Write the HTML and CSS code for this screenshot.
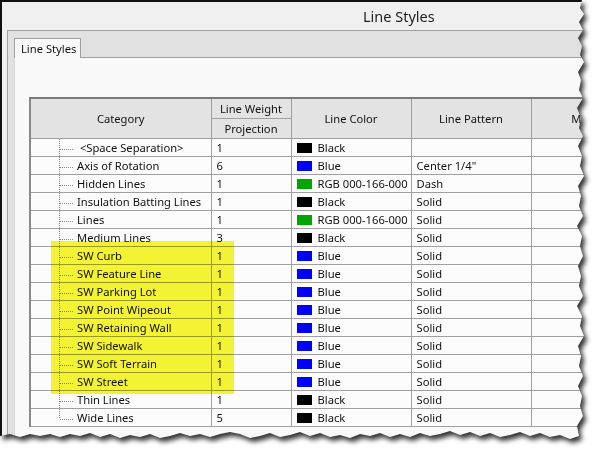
FILE: index.html
```html
<!DOCTYPE html>
<html lang="en">
<head>
  <meta charset="UTF-8">
  <title>Line Styles</title>
  <link rel="stylesheet" href="styles.css">
</head>
<body>
  <div class="sheet">
    <div class="paper">
      <div class="titlebar">Line Styles</div>

      <div class="frame">
        <div class="tabs">
          <div class="tab">Line Styles</div>
        </div>

        <div class="panel">
          <div class="grid-wrap">
            <table class="grid">
              <colgroup>
                <col class="c-cat">
                <col class="c-weight">
                <col class="c-color">
                <col class="c-pattern">
                <col class="c-material">
              </colgroup>
              <thead>
                <tr>
                  <th rowspan="2">Category</th>
                  <th class="half">Line Weight</th>
                  <th rowspan="2">Line Color</th>
                  <th rowspan="2">Line Pattern</th>
                  <th rowspan="2">Material</th>
                </tr>
                <tr>
                  <th class="half">Projection</th>
                </tr>
              </thead>
              <tbody>
                <tr>
                  <td class="cat"><span class="twig"></span> &lt;Space Separation&gt;</td>
                  <td>1</td>
                  <td><span class="swatch black"></span>Black</td>
                  <td></td>
                  <td></td>
                </tr>
                <tr>
                  <td class="cat"><span class="twig"></span>Axis of Rotation</td>
                  <td>6</td>
                  <td><span class="swatch blue"></span>Blue</td>
                  <td>Center 1/4"</td>
                  <td></td>
                </tr>
                <tr>
                  <td class="cat"><span class="twig"></span>Hidden Lines</td>
                  <td>1</td>
                  <td><span class="swatch green"></span>RGB 000-166-000</td>
                  <td>Dash</td>
                  <td></td>
                </tr>
                <tr>
                  <td class="cat"><span class="twig"></span>Insulation Batting Lines</td>
                  <td>1</td>
                  <td><span class="swatch black"></span>Black</td>
                  <td>Solid</td>
                  <td></td>
                </tr>
                <tr>
                  <td class="cat"><span class="twig"></span>Lines</td>
                  <td>1</td>
                  <td><span class="swatch green"></span>RGB 000-166-000</td>
                  <td>Solid</td>
                  <td></td>
                </tr>
                <tr>
                  <td class="cat"><span class="twig"></span>Medium Lines</td>
                  <td>3</td>
                  <td><span class="swatch black"></span>Black</td>
                  <td>Solid</td>
                  <td></td>
                </tr>
                <tr>
                  <td class="cat"><span class="twig"></span>SW Curb</td>
                  <td>1</td>
                  <td><span class="swatch blue"></span>Blue</td>
                  <td>Solid</td>
                  <td></td>
                </tr>
                <tr>
                  <td class="cat"><span class="twig"></span>SW Feature Line</td>
                  <td>1</td>
                  <td><span class="swatch blue"></span>Blue</td>
                  <td>Solid</td>
                  <td></td>
                </tr>
                <tr>
                  <td class="cat"><span class="twig"></span>SW Parking Lot</td>
                  <td>1</td>
                  <td><span class="swatch blue"></span>Blue</td>
                  <td>Solid</td>
                  <td></td>
                </tr>
                <tr>
                  <td class="cat"><span class="twig"></span>SW Point Wipeout</td>
                  <td>1</td>
                  <td><span class="swatch blue"></span>Blue</td>
                  <td>Solid</td>
                  <td></td>
                </tr>
                <tr>
                  <td class="cat"><span class="twig"></span>SW Retaining Wall</td>
                  <td>1</td>
                  <td><span class="swatch blue"></span>Blue</td>
                  <td>Solid</td>
                  <td></td>
                </tr>
                <tr>
                  <td class="cat"><span class="twig"></span>SW Sidewalk</td>
                  <td>1</td>
                  <td><span class="swatch blue"></span>Blue</td>
                  <td>Solid</td>
                  <td></td>
                </tr>
                <tr>
                  <td class="cat"><span class="twig"></span>SW Soft Terrain</td>
                  <td>1</td>
                  <td><span class="swatch blue"></span>Blue</td>
                  <td>Solid</td>
                  <td></td>
                </tr>
                <tr>
                  <td class="cat"><span class="twig"></span>SW Street</td>
                  <td>1</td>
                  <td><span class="swatch blue"></span>Blue</td>
                  <td>Solid</td>
                  <td></td>
                </tr>
                <tr>
                  <td class="cat"><span class="twig"></span>Thin Lines</td>
                  <td>1</td>
                  <td><span class="swatch black"></span>Black</td>
                  <td>Solid</td>
                  <td></td>
                </tr>
                <tr>
                  <td class="cat last"><span class="twig"></span>Wide Lines</td>
                  <td>5</td>
                  <td><span class="swatch black"></span>Black</td>
                  <td>Solid</td>
                  <td></td>
                </tr>
              </tbody>
            </table>

            <!-- highlighter mark over the SW rows -->
            <div class="highlight"></div>
          </div>
        </div>
      </div>
    </div>
  </div>
</body>
</html>
```

FILE: styles.css
```css
/* Page */
body {
  margin: 0;
  background: #fff;
  font-family: "Noto Sans", sans-serif;
  font-size: 11.2px;
  color: #111;
}

/* Torn screenshot with drop shadow */
.sheet {
  width: 599px;
  height: 458px;
  filter: drop-shadow(3px 4px 2.5px rgba(0, 0, 0, 0.8));
}

.paper {
  width: 588px;
  height: 446px;
  box-sizing: border-box;
  overflow: hidden;
  display: flex;
  flex-direction: column;
  background: #f0f0f0;
  border-top: 2px solid #111;
  border-left: 2px solid #111;
  clip-path: polygon(
    0 0, 582px 0, 580px 8px, 584px 14px, 579px 22px, 583px 30px, 578px 38px,
    582px 46px, 580px 55px, 584px 62px, 578px 72px, 581px 80px, 579px 90px,
    583px 98px, 577px 108px, 581px 118px, 579px 128px, 583px 136px, 578px 146px,
    582px 156px, 580px 166px, 584px 176px, 578px 186px, 581px 196px, 579px 206px,
    583px 216px, 577px 226px, 582px 236px, 580px 246px, 583px 256px, 578px 266px,
    581px 276px, 579px 286px, 583px 296px, 577px 306px, 582px 316px, 580px 326px,
    584px 336px, 578px 346px, 581px 356px, 579px 366px, 583px 376px, 578px 386px,
    582px 396px, 580px 406px, 583px 416px, 577px 426px, 579px 436px,
    570px 439px, 560px 435px, 550px 437px, 540px 433px, 530px 436px, 520px 432px,
    510px 435px, 500px 437px, 490px 433px, 480px 436px, 470px 432px, 460px 435px,
    450px 431px, 440px 434px, 430px 436px, 420px 433px, 410px 437px, 400px 434px,
    390px 437px, 380px 433px, 370px 436px, 360px 434px, 350px 438px, 340px 435px,
    330px 437px, 320px 433px, 310px 436px, 300px 432px, 290px 435px, 280px 437px,
    270px 433px, 260px 436px, 250px 438px, 240px 434px, 230px 432px, 220px 434px,
    210px 437px, 200px 434px, 190px 436px, 180px 433px, 170px 436px, 160px 438px,
    150px 434px, 140px 437px, 130px 435px, 120px 438px, 110px 434px, 100px 437px,
    90px 433px, 80px 436px, 70px 434px, 60px 437px, 50px 434px, 40px 436px,
    30px 434px, 20px 437px, 10px 434px, 0 436px
  );
}

/* Window title */
.titlebar {
  height: 28px;
  flex: none;
  padding-left: 361px;
  line-height: 28px;
  font-size: 14.5px;
  color: #222;
}

/* Tab control */
.frame {
  flex: 1;
  display: flex;
  flex-direction: column;
  margin-left: 5px;
  padding-left: 6px;
  background: #e1e1e1;
  border-top: 1px solid #a0a0a0;
  border-left: 1px solid #a0a0a0;
}

.tabs {
  height: 26px;
  flex: none;
  display: flex;
  align-items: flex-end;
  border-bottom: 1px solid #a0a0a0;
}

.tab {
  height: 19px;
  padding: 0 4px 0 6px;
  line-height: 19px;
  white-space: nowrap;
  background: #f9f9f9;
  border: 1px solid #a0a0a0;
  border-bottom: none;
  margin-bottom: -1px;
}

.panel {
  flex: 1;
  padding: 39px 0 0 14px;
  background: #f9f9f9;
  border-left: 1px solid #dadada;
}

/* Grid */
.grid-wrap {
  position: relative;
  width: 625px;
}

.grid {
  border-collapse: collapse;
  table-layout: fixed;
  width: 625px;
  background: #fcfcfc;
  border-top: 2px solid #7a7a7a;
  border-left: 2px solid #8a8a8a;
}

.c-cat { width: 181px; }
.c-weight { width: 80px; }
.c-color { width: 120px; }
.c-pattern { width: 120px; }
.c-material { width: 124px; }

.grid th {
  height: 38px;
  padding: 0;
  background: #e3e3e3;
  font-weight: normal;
  border: 1px solid #a0a0a0;
  white-space: nowrap;
}

.grid th.half {
  height: 19px;
}

.grid td {
  height: 17px;
  padding: 0 0 0 5px;
  line-height: 17px;
  border: 1px solid #a0a0a0;
  white-space: nowrap;
  overflow: hidden;
}

/* Tree lines in the category column */
.grid td.cat {
  padding-left: 29px;
  background: repeating-linear-gradient(to bottom, #8a8a8a 0 1px, transparent 1px 2px) no-repeat 28px 0 / 1px 100%;
}

.grid td.cat.last {
  background-size: 1px 9px;
}

.twig {
  display: inline-block;
  width: 14px;
  height: 1px;
  margin-right: 3px;
  vertical-align: middle;
  background: repeating-linear-gradient(to right, #8a8a8a 0 1px, transparent 1px 2px);
}

.swatch {
  display: inline-block;
  width: 15px;
  height: 10px;
  margin-right: 6px;
  vertical-align: -1px;
}
.swatch.black { background: #000; }
.swatch.blue { background: #0000ff; }
.swatch.green { background: #00a600; }

/* Yellow highlighter over the SW rows */
.highlight {
  position: absolute;
  left: 22px;
  top: 144px;
  width: 183px;
  height: 153px;
  background: #f6f634;
  mix-blend-mode: multiply;
}
```
